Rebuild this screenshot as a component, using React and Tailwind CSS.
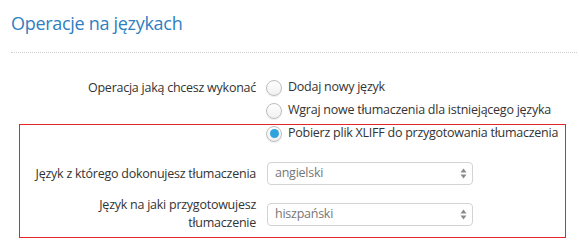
import React from "react";

function Radio({ checked }) {
  return (
    <span className="relative inline-flex h-[16px] w-[16px] shrink-0 items-center justify-center rounded-full border border-[#bdbdbd] bg-gradient-to-b from-white to-[#f0f0f0] shadow-[0_1px_1px_rgba(0,0,0,0.08)]">
      {checked && <span className="h-[9px] w-[9px] rounded-full bg-[#2ea3dc]" />}
    </span>
  );
}

function Select({ value }) {
  return (
    <div className="flex h-[23px] w-[206px] items-center justify-between rounded-[4px] border border-[#d3d3d3] bg-white pl-[7px] pr-[5px] text-[#777]">
      <span>{value}</span>
      <svg width="7" height="11" viewBox="0 0 7 11">
        <path d="M3.5 0.5 L6.5 4.5 L0.5 4.5 Z" fill="#8a8a8a" />
        <path d="M3.5 10.5 L6.5 6.5 L0.5 6.5 Z" fill="#8a8a8a" />
      </svg>
    </div>
  );
}

export default function App() {
  return (
    <div
      className="relative h-[240px] w-[579px] overflow-hidden bg-white pl-[11px] pr-[2px]"
      style={{ fontFamily: '"Open Sans", "Noto Sans", sans-serif' }}
    >
      <div className="border-b border-dotted border-[#cfcfcf] pb-[15px] pt-[9px]">
        <h1 className="text-[18px] font-normal leading-[28px] tracking-[-0.3px] text-[#2f7fc1]">Operacje na językach</h1>
      </div>

      <div className="mt-[23px] grid grid-cols-[245px_1fr] gap-x-[10px] text-[12.5px] tracking-[-0.25px] text-[#333]">
        <div className="pl-[20px] text-right leading-[23px]">Operacja jaką chcesz wykonać</div>
        <div className="flex flex-col">
          <label className="flex h-[23px] items-center gap-[6px]">
            <Radio />
            <span>Dodaj nowy język</span>
          </label>
          <label className="flex h-[23px] items-center gap-[6px]">
            <Radio />
            <span>Wgraj nowe tłumaczenia dla istniejącego języka</span>
          </label>
          <label className="flex h-[23px] items-center gap-[6px]">
            <Radio checked />
            <span>Pobierz plik XLIFF do przygotowania tłumaczenia</span>
          </label>
        </div>

        <div className="mt-[17px] flex items-center justify-end pl-[20px] text-right leading-[18px]">
          Język z którego dokonujesz tłumaczenia
        </div>
        <div className="mt-[17px] flex items-center pl-px">
          <Select value="angielski" />
        </div>

        <div className="mt-[11px] flex items-center justify-end pl-[20px] text-right leading-[18px]">
          Język na jaki przygotowujesz tłumaczenie
        </div>
        <div className="mt-[11px] flex items-center pl-px">
          <Select value="hiszpański" />
        </div>
      </div>

      <div className="pointer-events-none absolute left-[19px] top-[124px] h-[114px] w-[547px] border border-[#e3262a]" />
    </div>
  );
}
